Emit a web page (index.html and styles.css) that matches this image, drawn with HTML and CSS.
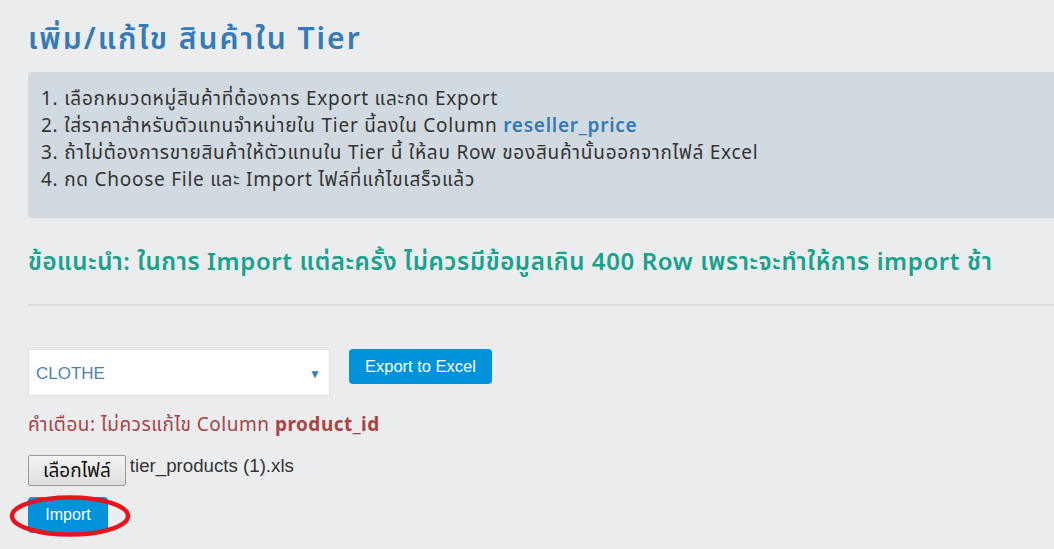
FILE: index.html
```html
<!DOCTYPE html>
<html lang="th">
<head>
  <meta charset="UTF-8">
  <meta name="viewport" content="width=device-width, initial-scale=1.0">
  <title>เพิ่ม/แก้ไข สินค้าใน Tier</title>
  <link rel="stylesheet" href="styles.css">
</head>
<body>
  <div id="page">
    <h1 class="title">เพิ่ม/แก้ไข สินค้าใน Tier</h1>
    <div class="steps">
      <div>1. เลือกหมวดหมู่สินค้าที่ต้องการ Export และกด Export</div>
      <div>2. ใส่ราคาสำหรับตัวแทนจำหน่ายใน Tier นี้ลงใน Column <b class="hl">reseller_price</b></div>
      <div>3. ถ้าไม่ต้องการขายสินค้าให้ตัวแทนใน Tier นี้ ให้ลบ Row ของสินค้านั้นออกจากไฟล์ Excel</div>
      <div>4. กด Choose File และ Import ไฟล์ที่แก้ไขเสร็จแล้ว</div>
    </div>
    <h3 class="advice">ข้อแนะนำ: ในการ Import แต่ละครั้ง ไม่ควรมีข้อมูลเกิน 400 Row เพราะจะทำให้การ import ช้า</h3>
    <hr class="sep">
    <form id="tier-form">
      <div class="export-row">
        <div class="select-box">
          <span>CLOTHE</span>
          <span class="caret">&#9660;</span>
        </div>
        <button type="button" class="btn">Export to Excel</button>
      </div>
      <p class="warn">คำเตือน: ไม่ควรแก้ไข Column <b>product_id</b></p>
      <div class="file-row">
        <span class="file-btn">เลือกไฟล์</span>
        <span class="file-name">tier_products (1).xls</span>
      </div>
      <div class="import-wrap">
        <button type="button" class="btn btn-import">Import</button>
        <svg class="ring" width="124" height="44" viewBox="0 0 124 44">
          <ellipse cx="62" cy="22" rx="58" ry="18.5" fill="none" stroke="#e8141c" stroke-width="4.5"/>
        </svg>
      </div>
    </form>
  </div>
</body>
</html>
```

FILE: styles.css
```css
body {
  margin: 0;
  background-color: #ebecee;
  font-family: "Noto Sans", "Noto Sans Thai", "DejaVu Sans", sans-serif;
  color: #333;
  overflow: hidden;
}
#page {
  padding: 0 0 0 28px;
}
.title {
  margin: 0;
  padding-top: 16px;
  height: 56px;
  box-sizing: border-box;
  font-size: 30px;
  letter-spacing: 2px;
  font-weight: 600;
  color: #337ab7;
  line-height: 44px;
}
.steps {
  background-color: #d1dae0;
  border-radius: 4px 0 0 4px;
  padding: 13px 0 30px 13px;
  height: 146px;
  box-sizing: border-box;
  margin-top: 16px;
  font-size: 19px;
  letter-spacing: 0.75px;
  line-height: 27px;
  color: #333;
}
.steps .hl {
  color: #337ab7;
  font-weight: 600;
}
.advice {
  margin: 26px 0 0;
  font-size: 24px;
  letter-spacing: 0.62px;
  line-height: 34px;
  font-weight: 600;
  color: #16a28c;
}
.sep {
  margin: 26px 0 0;
  border: 0;
  border-top: 2px solid #dcdde0;
}
.export-row {
  display: flex;
  align-items: flex-start;
  gap: 19px;
  margin-top: 43px;
}
.select-box {
  width: 302px;
  height: 47px;
  box-sizing: border-box;
  background: #fff;
  border: 1px solid #e0e1e3;
  display: flex;
  align-items: center;
  justify-content: space-between;
  padding: 2px 8px 0 7px;
  font-family: "Liberation Sans", Arial, sans-serif;
  font-size: 17px;
  color: #4f7fb0;
}
.caret {
  font-size: 12px;
  color: #3b7ab8;
}
.btn {
  background-color: #0093dc;
  color: #fff;
  border: 0;
  border-radius: 4px;
  font-family: "Liberation Sans", Arial, sans-serif;
  font-size: 16.5px;
  padding: 0 16px;
  height: 35px;
  cursor: pointer;
}
.warn {
  margin: 14px 0 0;
  font-size: 19px;
  letter-spacing: 0.5px;
  line-height: 28px;
  color: #a94442;
}
.warn b {
  font-weight: 700;
}
.file-row {
  display: flex;
  align-items: flex-start;
  gap: 4px;
  margin-top: 17px;
}
.file-btn {
  display: inline-block;
  box-sizing: border-box;
  height: 31px;
  padding: 0 14px;
  border: 1px solid #999;
  background: linear-gradient(#f4f4f4, #dedede);
  font-size: 19px;
  line-height: 29px;
  color: #111;
  border-radius: 2px;
}
.file-name {
  font-family: "Liberation Sans", Arial, sans-serif;
  font-size: 18.7px;
  line-height: 22px;
  color: #333;
}
.import-wrap {
  position: relative;
  margin-top: 11px;
  height: 40px;
}
.btn-import {
  height: 36px;
  width: 80px;
  padding: 0;
  font-size: 16px;
}
.ring {
  position: absolute;
  left: -20px;
  top: -3px;
}
```
